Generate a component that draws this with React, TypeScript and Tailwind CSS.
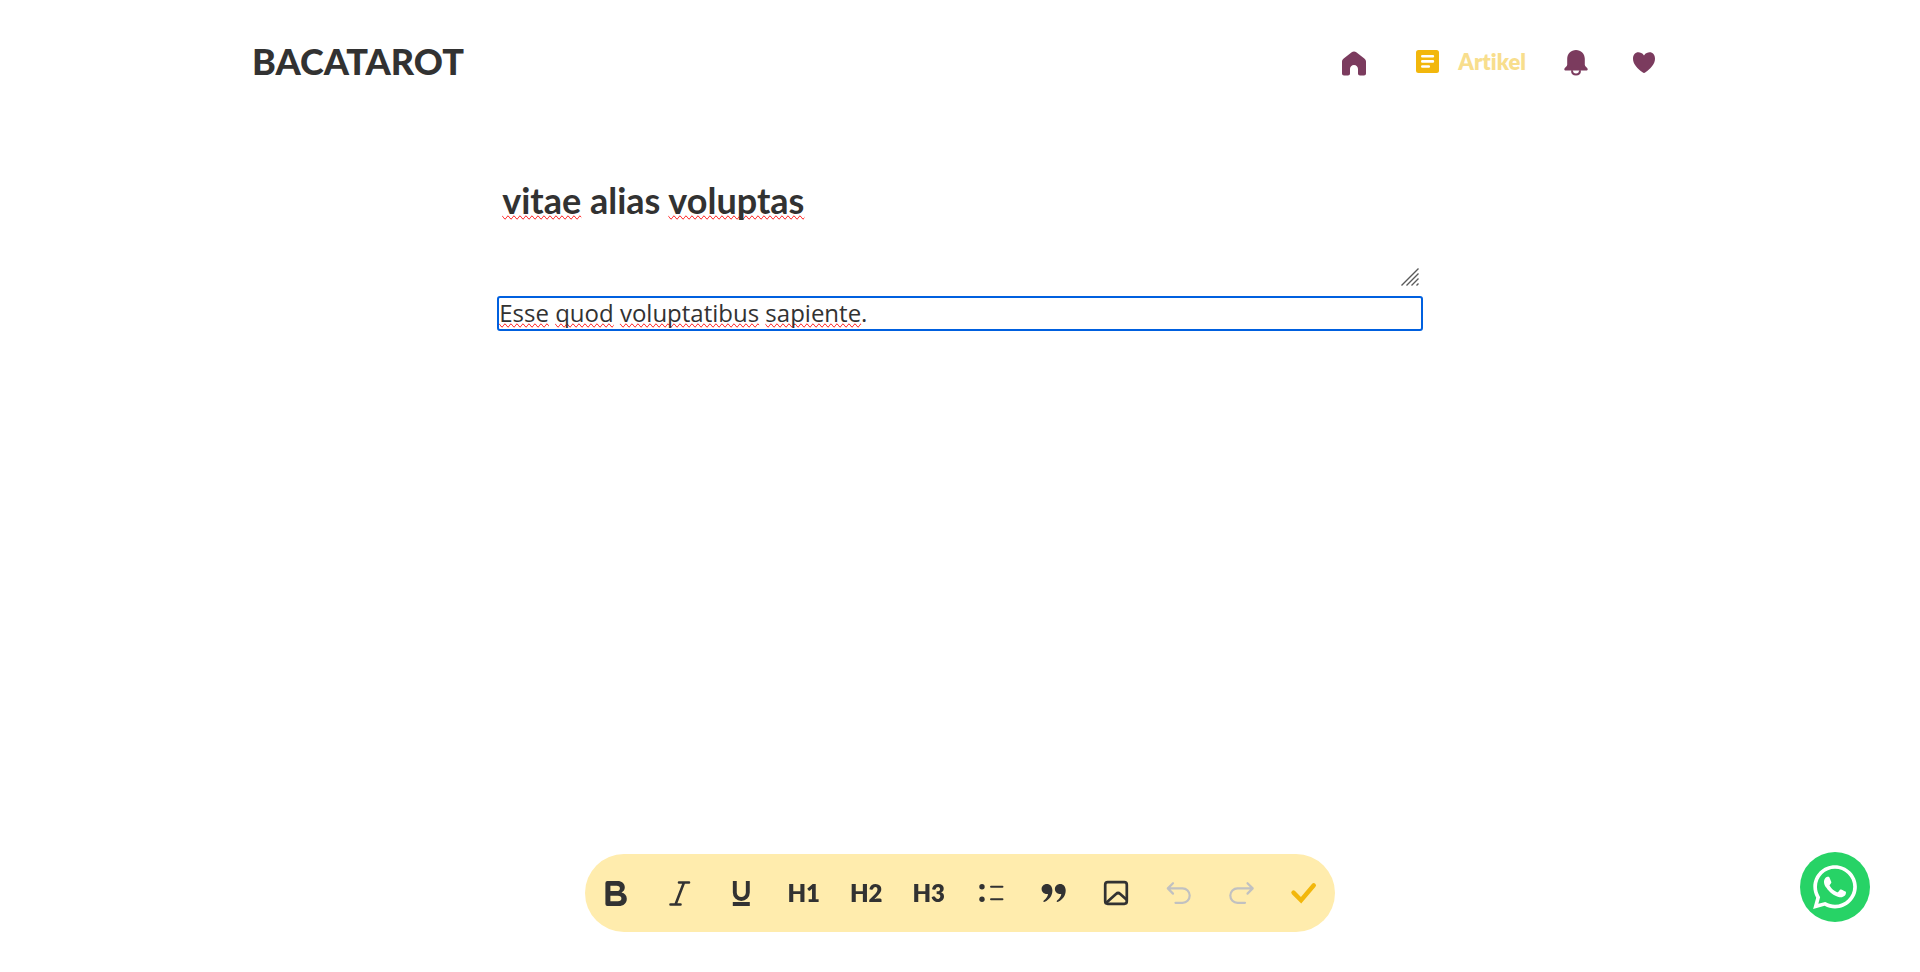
import { useState, type ReactNode } from "react";
import { FaWhatsapp } from "react-icons/fa";

const title = "vitae alias voluptas";

function Glyph({ children }: { children: ReactNode }) {
  return (
    <svg viewBox="0 0 28 28" className="size-7" fill="none" aria-hidden="true">
      {children}
    </svg>
  );
}

function Misspelled({ children }: { children: ReactNode }) {
  return <span className="[text-decoration-line:spelling-error]">{children}</span>;
}

function Header() {
  return (
    <header className="mx-auto flex w-[1416px] max-w-full items-center justify-between pt-9">
      <a href="#home" className="font-['Lato',sans-serif] text-4xl leading-[50px] font-black text-[#323232]">
        BACATAROT
      </a>
      <nav className="flex items-center pt-0.5 pr-[10px] text-[#7b3b5e]">
        <a href="#home" aria-label="Beranda" className="mr-[46px]">
          <Glyph>
            <path
              fill="currentColor"
              d="M14 3.500c.9 0 1.600.3 2.300.8l8 6.200c1.100.9 1.700 1.900 1.700 3.200V25.500c0 1.200-.8 2-2 2h-4c-1.200 0-2-.8-2-2v-4.500c0-2.300-1.700-4-4-4s-4 1.700-4 4V25.500c0 1.200-.8 2-2 2H4c-1.200 0-2-.8-2-2V13.700c0-1.300.6-2.300 1.700-3.200l8-6.200C12.400 3.800 13.100 3.500 14 3.500z"
            />
          </Glyph>
        </a>
        <a href="#artikel" className="mr-9 flex items-center gap-4">
          <Glyph>
            <rect x="2" y="2" width="23" height="23" rx="2.500" fill="#f2b70c" />
            <path d="M8.300 8.300h10.600M8.300 13.400h10.600M8.300 18.500h6.500" stroke="#fff" strokeWidth="2.600" strokeLinecap="round" />
          </Glyph>
          <span className="font-['Lato',sans-serif] text-[22px] leading-7 font-extrabold text-[#f8de8d] [font-variant-ligatures:none]">
            Artikel
          </span>
        </a>
        <a href="#notifikasi" aria-label="Notifikasi" className="mr-10">
          <Glyph>
            <g transform="translate(0 0.8)">
              <path
                fill="currentColor"
                d="M14 1.200c5 0 8.800 3.800 8.800 8.700v6c0 1.700 2.700 3.100 2.900 4.300.1 1-.6 1.500-1.700 1.500H4c-1.100 0-1.800-.5-1.700-1.500.2-1.200 2.900-2.600 2.900-4.300v-6c0-4.900 3.800-8.700 8.800-8.700z"
              />
              <path d="M10 21.500c0 2.500 1.600 4.300 4 4.300s4-1.800 4-4.300" stroke="currentColor" strokeWidth="2" />
            </g>
          </Glyph>
        </a>
        <a href="#favorit" aria-label="Favorit">
          <Glyph>
            <path
              fill="currentColor"
              transform="translate(0 1)"
              d="M14 6.400C15.700 4 17.800 3.300 19.600 3.300c3.200 0 5.400 2.700 5.400 6.400 0 5.500-4.800 10-9.500 13.600-1 .8-2 .8-3 0C7.800 19.700 3 15.200 3 9.700c0-3.700 2.200-6.400 5.400-6.400 1.800 0 3.900.7 5.600 3.100z"
            />
          </Glyph>
        </a>
      </nav>
    </header>
  );
}

function TitleField() {
  const [value, setValue] = useState(title);
  return (
    <div className="relative h-28 font-['Lato',sans-serif] text-4xl leading-10 font-bold text-[#323232]">
      {value === title && (
        <div aria-hidden="true" className="pointer-events-none absolute inset-0 px-[3px] py-1 text-transparent">
          <Misspelled>vitae</Misspelled> alias <Misspelled>voluptas</Misspelled>
        </div>
      )}
      <textarea
        aria-label="Judul artikel"
        value={value}
        onChange={(event) => setValue(event.target.value)}
        className="relative block h-full w-full resize-none bg-transparent px-[3px] py-1 outline-none"
      />
      <svg
        viewBox="0 0 18 18"
        className="pointer-events-none absolute right-0.5 bottom-0.5 size-[18px]"
        stroke="#5a5a5a"
        strokeWidth="1.400"
        aria-hidden="true"
      >
        <path d="M0.500 17.500L17.500 0.500M5.500 17.500L17.500 5.500M10.500 17.500L17.500 10.500M15.500 17.500L17.500 15.500" />
      </svg>
    </div>
  );
}

const headingStyle = "font-['Lato',sans-serif] text-2xl font-extrabold";

const quoteMark =
  "M6.800 5c3.300 0 5.600 2.700 5.600 6.500 0 5-3 9.200-7.600 11.300-1.200.5-1.900-.6-1-1.400 2.600-2 4-4.300 4.200-6.500-.4.100-.8.200-1.200.200-2.900 0-5.200-2.200-5.200-5S3.900 5 6.800 5z";

const tools: { label: string; disabled?: boolean; icon: ReactNode }[] = [
  {
    label: "Tebal",
    icon: (
      <Glyph>
        <path
          fill="currentColor"
          fillRule="evenodd"
          d="M5.400 2H15.500c4.400 0 7.300 2.500 7.300 6.300 0 2.500-1.200 4.200-3.300 5.200 3.300.8 5.300 3 5.300 6.200 0 4.600-3.200 7.300-8.200 7.300H5.400a2 2 0 0 1-2-2V4a2 2 0 0 1 2-2zM8.400 6.700v5.300h6.200c2.200 0 3.300-.9 3.300-2.600s-1.100-2.700-3.300-2.700zM8.400 16.700v5.600h7.500c2.300 0 3.500-1 3.500-2.800s-1.200-2.800-3.500-2.800z"
        />
      </Glyph>
    ),
  },
  {
    label: "Miring",
    icon: (
      <Glyph>
        <path d="M14 3.500h10M5.500 25.500h10M19 3.500L10.500 25.500" stroke="currentColor" strokeWidth="2.600" strokeLinecap="round" />
      </Glyph>
    ),
  },
  {
    label: "Garis bawah",
    icon: (
      <Glyph>
        <path d="M7.800 2v11.500a6.500 6.500 0 0 0 13 0V2" stroke="currentColor" strokeWidth="3.900" />
        <path d="M5.800 25h17" stroke="currentColor" strokeWidth="4" />
      </Glyph>
    ),
  },
  { label: "Judul 1", icon: <span className={headingStyle}>H1</span> },
  { label: "Judul 2", icon: <span className={headingStyle}>H2</span> },
  { label: "Judul 3", icon: <span className={headingStyle}>H3</span> },
  {
    label: "Daftar",
    icon: (
      <Glyph>
        <circle cx="5" cy="7.700" r="2.700" fill="currentColor" />
        <circle cx="5" cy="20.300" r="2.700" fill="currentColor" />
        <path d="M14 7.700h11.500M14 20.300h11.500" stroke="currentColor" strokeWidth="1.900" strokeLinecap="round" />
      </Glyph>
    ),
  },
  {
    label: "Kutipan",
    icon: (
      <Glyph>
        <path fill="currentColor" d={quoteMark} />
        <path fill="currentColor" transform="translate(13.300 0)" d={quoteMark} />
      </Glyph>
    ),
  },
  {
    label: "Gambar",
    icon: (
      <Glyph>
        <rect x="3.200" y="3.200" width="21.600" height="21.600" rx="2.500" stroke="currentColor" strokeWidth="2.700" />
        <path d="M4 24l10-9.100c1.500-1.300 2.700-1.300 4.200 0L25 21" stroke="currentColor" strokeWidth="2.700" />
      </Glyph>
    ),
  },
  {
    label: "Urungkan",
    disabled: true,
    icon: (
      <Glyph>
        <path
          d="M8 4.200L2.800 9.400 8 14.600M3 9.400h14.500a7.200 7.200 0 0 1 0 14.400h-7"
          stroke="currentColor"
          strokeWidth="2.200"
          strokeLinecap="round"
          strokeLinejoin="round"
        />
      </Glyph>
    ),
  },
  {
    label: "Ulangi",
    disabled: true,
    icon: (
      <Glyph>
        <path
          d="M20.500 4.200l5.200 5.200-5.200 5.200M25.500 9.400H10.500a7.200 7.200 0 0 0 0 14.400h7.500"
          stroke="currentColor"
          strokeWidth="2.200"
          strokeLinecap="round"
          strokeLinejoin="round"
        />
      </Glyph>
    ),
  },
  {
    label: "Simpan",
    icon: (
      <Glyph>
        <path d="M3.500 13.600l7.600 7.600L23.800 6.300" stroke="#f2b70c" strokeWidth="4.400" strokeLinecap="round" />
      </Glyph>
    ),
  },
];

function Toolbar() {
  return (
    <div
      role="toolbar"
      aria-label="Format teks"
      className="grid w-[750px] grid-cols-12 rounded-full bg-[#ffecad] text-[#323232]"
    >
      {tools.map((tool) => (
        <button
          key={tool.label}
          type="button"
          aria-label={tool.label}
          disabled={tool.disabled}
          className="flex h-[78px] items-center justify-center disabled:text-[#c1c1c1]"
        >
          {tool.icon}
        </button>
      ))}
    </div>
  );
}

export default function App() {
  return (
    <div className="flex min-h-screen flex-col bg-white">
      <Header />
      <main className="mx-auto w-[48%] grow pt-[90px]">
        <TitleField />
        <div
          role="textbox"
          aria-label="Isi artikel"
          aria-multiline="true"
          contentEditable
          suppressContentEditableWarning
          spellCheck={false}
          className="mt-[10px] rounded-[1px] pb-0.5 font-['Open_Sans',sans-serif] text-2xl leading-[29px] text-[#323232] outline-2 outline-[#0060df]"
        >
          <Misspelled>Esse</Misspelled> <Misspelled>quod</Misspelled> <Misspelled>voluptatibus</Misspelled>{" "}
          <Misspelled>sapiente</Misspelled>.
        </div>
      </main>
      <div className="fixed inset-x-0 bottom-10 flex justify-center">
        <Toolbar />
      </div>
      <a
        href="#whatsapp"
        aria-label="WhatsApp"
        className="fixed right-[50px] bottom-[50px] flex size-[70px] items-center justify-center rounded-full bg-[#27d366] text-white"
      >
        <FaWhatsapp className="h-[50px] w-11" />
      </a>
    </div>
  );
}
